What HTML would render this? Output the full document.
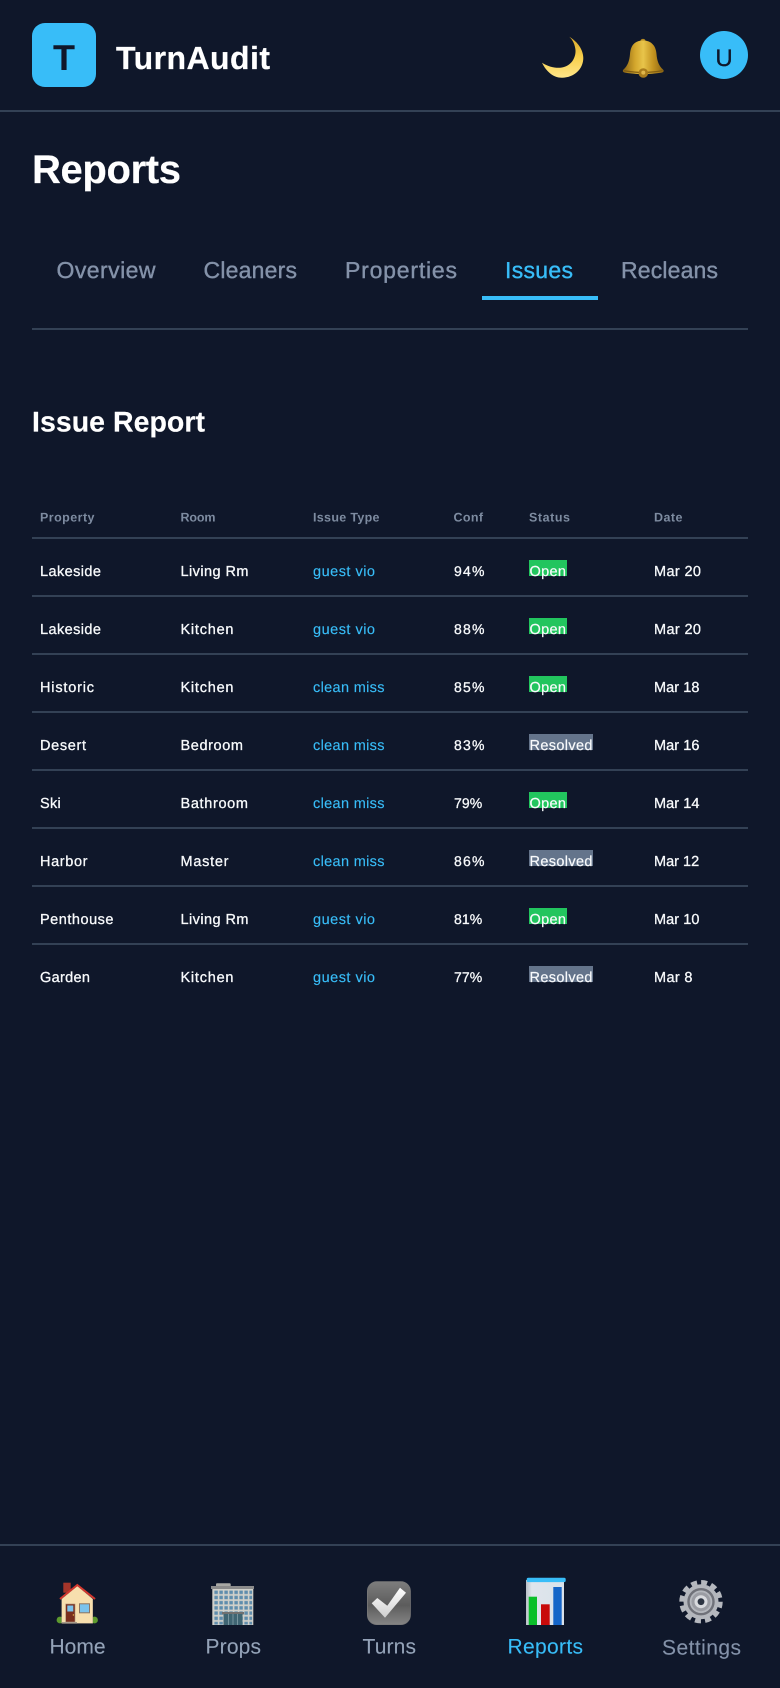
<!DOCTYPE html>
<html lang="en">
<head>
<meta charset="utf-8">
<title>TurnAudit Reports</title>
<style>
html,body{margin:0;padding:0;background:#0f172a;width:780px;height:1688px;overflow:hidden}
svg{display:block}
text{font-family:"Liberation Sans",Arial,sans-serif;text-rendering:geometricPrecision}
.h{font-size:12.5px;font-weight:700;fill:#7d8ba0}
.c{font-size:14.5px;fill:#f8fafc;stroke:#f8fafc;stroke-width:.3}
.p{font-size:14px;fill:#f8fafc;stroke:#f8fafc;stroke-width:.3}
.a{font-size:14.5px;fill:#38bdf8;stroke:#38bdf8;stroke-width:.15}
.b{font-size:14.5px;fill:#f8fafc;stroke:#f8fafc;stroke-width:.2}
.t{font-size:23px;fill:#8492a9;stroke:#8492a9;stroke-width:.4}
.n{font-size:21px;fill:#94a3b8;stroke:#94a3b8;stroke-width:.1}
</style>
</head>
<body>
<svg xmlns="http://www.w3.org/2000/svg" width="780" height="1688" viewBox="0 0 780 1688">
<defs>
<linearGradient id="moon" x1="0" y1="0" x2="0" y2="1"><stop offset="0" stop-color="#d9a92a"/><stop offset=".5" stop-color="#f7cf4c"/><stop offset="1" stop-color="#ffe68a"/></linearGradient>
<linearGradient id="bell" x1="0" y1="0" x2="1" y2="0"><stop offset="0" stop-color="#8a6414"/><stop offset=".3" stop-color="#d3a62c"/><stop offset=".5" stop-color="#e8c44a"/><stop offset=".75" stop-color="#c2921f"/><stop offset="1" stop-color="#8a6414"/></linearGradient>
<linearGradient id="chk" x1="0" y1="0" x2="0" y2="1"><stop offset="0" stop-color="#7d7d7d"/><stop offset=".55" stop-color="#5c5c5c"/><stop offset="1" stop-color="#858585"/></linearGradient>
<linearGradient id="tick" x1="0" y1="0" x2="0" y2="1"><stop offset="0" stop-color="#ffffff"/><stop offset="1" stop-color="#cfcfcf"/></linearGradient>
<linearGradient id="chart" x1="0" y1="0" x2="1" y2="0"><stop offset="0" stop-color="#b9bfc6"/><stop offset=".15" stop-color="#dfe5ec"/><stop offset="1" stop-color="#dae2ea"/></linearGradient>
<pattern id="win" x="214" y="1590" width="5" height="5.2" patternUnits="userSpaceOnUse"><rect x=".4" y=".6" width="3.4" height="3.4" fill="#5f8dad"/></pattern>
</defs>
<rect width="780" height="1688" fill="#0f172a"/>

<!-- Header -->
<rect x="32" y="23" width="64" height="64" rx="13" fill="#38bdf8"/>
<text x="64" y="70" text-anchor="middle" font-size="36" font-weight="700" fill="#0f172a">T</text>
<text x="116" y="69" font-size="32" font-weight="700" fill="#fff" stroke="#fff" stroke-width=".2" textLength="154">TurnAudit</text>
<path d="M569.3 36.7C578 42 583.3 50 583.3 58C583.3 69 574 77.7 562 77.7C553 77.7 546 71 542 62.7C549 67 556 68.5 562 67.5C571 66 576 58 575.5 50C575 45 573 40 569.3 36.7Z" fill="url(#moon)"/>
<path d="M640.5 41C640.5 38.2 645.5 38.2 645.5 41L645.5 42.5L640.5 42.5Z" fill="#b58a22"/>
<path d="M643 40.5C652 40.5 656 46.5 656.5 54C657 61 659 66 663 69.5C664.5 71 663.5 72.5 661 72.8C650 74.5 636 74.5 625.5 72.8C623 72.5 622 71 623.5 69.5C627.5 66 629.5 61 630 54C630.5 46.5 634 40.5 643 40.5Z" fill="url(#bell)"/>
<path d="M624 70.5C634 73 652 73 662.5 70.5" fill="none" stroke="#7f5c12" stroke-width="1.2"/>
<circle cx="643.3" cy="73" r="4.8" fill="#a97c1c"/><circle cx="643.3" cy="72.6" r="2" fill="#e0b64a"/>
<circle cx="724" cy="55" r="24" fill="#38bdf8"/>
<text x="724" y="66" text-anchor="middle" font-size="24" fill="#0f172a" stroke="#0f172a" stroke-width=".3">U</text>
<rect x="0" y="110" width="780" height="2" fill="#334155"/>

<!-- Title -->
<text x="32" y="183" font-size="40" font-weight="700" fill="#fff" stroke="#fff" stroke-width=".2" textLength="149">Reports</text>

<!-- Tabs -->
<text class="t" x="56.5" y="278" textLength="99">Overview</text>
<text class="t" x="203.5" y="278" textLength="93.5">Cleaners</text>
<text class="t" x="345" y="278" textLength="112">Properties</text>
<text class="t" x="505" y="278" textLength="68" style="fill:#38bdf8;stroke:#38bdf8">Issues</text>
<text class="t" x="621" y="278" textLength="97">Recleans</text>
<rect x="482" y="296" width="116" height="4" fill="#38bdf8"/>
<rect x="32" y="328" width="716" height="2" fill="#334155"/>

<text x="32" y="431.5" font-size="28.5" font-weight="700" fill="#fff" stroke="#fff" stroke-width=".15" textLength="173">Issue Report</text>

<!-- Table header -->
<text class="h" x="40" y="521.5" textLength="54.5">Property</text>
<text class="h" x="180.5" y="521.5" textLength="35">Room</text>
<text class="h" x="313" y="521.5" textLength="66.5">Issue Type</text>
<text class="h" x="453.5" y="521.5" textLength="29.5">Conf</text>
<text class="h" x="529" y="521.5" textLength="41">Status</text>
<text class="h" x="654" y="521.5" textLength="28.5">Date</text>
<g fill="#334155">
<rect x="32" y="537" width="716" height="2"/>
<rect x="32" y="595" width="716" height="2"/>
<rect x="32" y="653" width="716" height="2"/>
<rect x="32" y="711" width="716" height="2"/>
<rect x="32" y="769" width="716" height="2"/>
<rect x="32" y="827" width="716" height="2"/>
<rect x="32" y="885" width="716" height="2"/>
<rect x="32" y="943" width="716" height="2"/>
</g>

<!-- Badges -->
<g fill="#22c55e">
<rect x="529" y="560" width="38" height="16"/>
<rect x="529" y="618" width="38" height="16"/>
<rect x="529" y="676" width="38" height="16"/>
<rect x="529" y="792" width="38" height="16"/>
<rect x="529" y="908" width="38" height="16"/>
</g>
<g fill="#64748b">
<rect x="529" y="734" width="64" height="16"/>
<rect x="529" y="850" width="64" height="16"/>
<rect x="529" y="966" width="64" height="16"/>
</g>

<!-- Row 1 -->
<text class="c" x="40" y="576" textLength="61">Lakeside</text>
<text class="c" x="180.5" y="576" textLength="68">Living Rm</text>
<text class="a" x="313" y="576" textLength="62">guest vio</text>
<text class="p" x="454" y="576" textLength="30.5">94%</text>
<text class="b" x="529.5" y="576" textLength="36.5">Open</text>
<text class="c" x="654" y="576" textLength="47">Mar 20</text>
<!-- Row 2 -->
<text class="c" x="40" y="634" textLength="61">Lakeside</text>
<text class="c" x="180.5" y="634" textLength="53">Kitchen</text>
<text class="a" x="313" y="634" textLength="62">guest vio</text>
<text class="p" x="454" y="634" textLength="30.5">88%</text>
<text class="b" x="529.5" y="634" textLength="36.5">Open</text>
<text class="c" x="654" y="634" textLength="47">Mar 20</text>
<!-- Row 3 -->
<text class="c" x="40" y="692" textLength="54">Historic</text>
<text class="c" x="180.5" y="692" textLength="53">Kitchen</text>
<text class="a" x="313" y="692" textLength="71.5">clean miss</text>
<text class="p" x="454" y="692" textLength="30.5">85%</text>
<text class="b" x="529.5" y="692" textLength="36.5">Open</text>
<text class="c" x="654" y="692" textLength="45.5">Mar 18</text>
<!-- Row 4 -->
<text class="c" x="40" y="750" textLength="46">Desert</text>
<text class="c" x="180.5" y="750" textLength="62.5">Bedroom</text>
<text class="a" x="313" y="750" textLength="71.5">clean miss</text>
<text class="p" x="454" y="750" textLength="30.5">83%</text>
<text class="b" x="529.5" y="750" textLength="63">Resolved</text>
<text class="c" x="654" y="750" textLength="45.5">Mar 16</text>
<!-- Row 5 -->
<text class="c" x="40" y="808" textLength="20.7">Ski</text>
<text class="c" x="180.5" y="808" textLength="67.5">Bathroom</text>
<text class="a" x="313" y="808" textLength="71.5">clean miss</text>
<text class="p" x="454" y="808" textLength="28.2">79%</text>
<text class="b" x="529.5" y="808" textLength="36.5">Open</text>
<text class="c" x="654" y="808" textLength="45.5">Mar 14</text>
<!-- Row 6 -->
<text class="c" x="40" y="866" textLength="47.5">Harbor</text>
<text class="c" x="180.5" y="866" textLength="48">Master</text>
<text class="a" x="313" y="866" textLength="71.5">clean miss</text>
<text class="p" x="454" y="866" textLength="30.5">86%</text>
<text class="b" x="529.5" y="866" textLength="63">Resolved</text>
<text class="c" x="654" y="866" textLength="45.2">Mar 12</text>
<!-- Row 7 -->
<text class="c" x="40" y="924" textLength="73.5">Penthouse</text>
<text class="c" x="180.5" y="924" textLength="68">Living Rm</text>
<text class="a" x="313" y="924" textLength="62">guest vio</text>
<text class="p" x="454" y="924" textLength="28.2">81%</text>
<text class="b" x="529.5" y="924" textLength="36.5">Open</text>
<text class="c" x="654" y="924" textLength="45.5">Mar 10</text>
<!-- Row 8 -->
<text class="c" x="40" y="982" textLength="50">Garden</text>
<text class="c" x="180.5" y="982" textLength="53">Kitchen</text>
<text class="a" x="313" y="982" textLength="62">guest vio</text>
<text class="p" x="454" y="982" textLength="28.2">77%</text>
<text class="b" x="529.5" y="982" textLength="63">Resolved</text>
<text class="c" x="654" y="982" textLength="38.5">Mar 8</text>

<!-- Bottom nav -->
<rect x="0" y="1544" width="780" height="2" fill="#334155"/>

<!-- Home -->
<circle cx="60" cy="1620" r="3.4" fill="#5d9a2e"/><circle cx="94.5" cy="1620" r="3.4" fill="#5d9a2e"/>
<rect x="63.3" y="1582.7" width="7.4" height="10" fill="#a5352a"/>
<path d="M61.7 1599L77.3 1586L92.7 1599V1623.3H61.7Z" fill="#f7dfae" stroke="#b7a68c" stroke-width=".5"/>
<path d="M60 1599L77.3 1585L95 1599" fill="none" stroke="#d2372e" stroke-width="2"/>
<rect x="65.7" y="1604" width="9.3" height="18" fill="#7a2e1c" stroke="#a88f78" stroke-width=".6"/>
<rect x="67.3" y="1605.5" width="6" height="6" fill="#7cc3ec"/>
<circle cx="73.4" cy="1615" r=".7" fill="#e9b84a"/>
<rect x="79" y="1603.3" width="11" height="10" fill="#8d7460"/>
<rect x="80" y="1604.3" width="9" height="8" fill="#7cc3ec"/>
<rect x="62" y="1622" width="15" height="1.6" fill="#a89c8c"/>

<!-- Props -->
<rect x="216" y="1583.3" width="14.7" height="3.5" rx="1" fill="#a8a8a4"/>
<rect x="211" y="1586" width="43" height="3" fill="#8b8b8b"/>
<rect x="212.3" y="1589" width="41" height="36" fill="#d0d0ca"/>
<rect x="213.5" y="1590" width="38.6" height="34.5" fill="url(#win)"/>
<rect x="222" y="1612" width="22" height="2.4" fill="#707070"/>
<rect x="223.5" y="1614" width="19" height="11" fill="#3f6573"/>
<path d="M228.5 1614V1625M233 1614V1625M237.5 1614V1625" stroke="#8fa9b0" stroke-width=".7"/>

<!-- Turns -->
<rect x="367.4" y="1581.6" width="43" height="43" rx="9.5" fill="url(#chk)" stroke="#787878" stroke-width=".8"/>
<path d="M371.7 1603.3L377.3 1598L387.3 1605.7L400 1587.7L406 1592.7L385 1617.7Z" fill="url(#tick)"/>

<!-- Reports icon -->
<rect x="526" y="1580" width="38" height="45" fill="url(#chart)"/>
<rect x="526.7" y="1577.7" width="39" height="4.4" rx="1.6" fill="#38bdf8"/>
<rect x="528.7" y="1596.7" width="8.3" height="28.3" fill="#0bbf2a"/>
<rect x="541" y="1604.3" width="8.7" height="20.7" fill="#c80a0a"/>
<rect x="553.3" y="1587" width="8.4" height="38" fill="#1565c8"/>

<!-- Settings icon -->
<circle cx="701" cy="1601.7" r="19.3" fill="none" stroke="#b5b8be" stroke-width="4.8" stroke-dasharray="6 4.106"/>
<circle cx="701" cy="1601.7" r="17.5" fill="#b4b7bd"/>
<circle cx="701" cy="1601.7" r="12.5" fill="none" stroke="#6f7179" stroke-width="2.4"/>
<circle cx="701" cy="1601.7" r="9.5" fill="#9a9ca3"/>
<circle cx="701" cy="1601.7" r="6.5" fill="#d8dade"/>
<circle cx="701" cy="1601.7" r="3.4" fill="#2c3442"/>

<text class="n" x="49.5" y="1653.5" textLength="56">Home</text>
<text class="n" x="205.5" y="1653.5" textLength="55.5">Props</text>
<text class="n" x="362.5" y="1653.5" textLength="53.5">Turns</text>
<text class="n" x="507.5" y="1653.5" textLength="75.5" style="fill:#38bdf8;stroke:#38bdf8">Reports</text>
<text class="n" x="662" y="1654.5" textLength="79" style="fill:#8492a9;stroke:#8492a9">Settings</text>
</svg>
</body>
</html>
